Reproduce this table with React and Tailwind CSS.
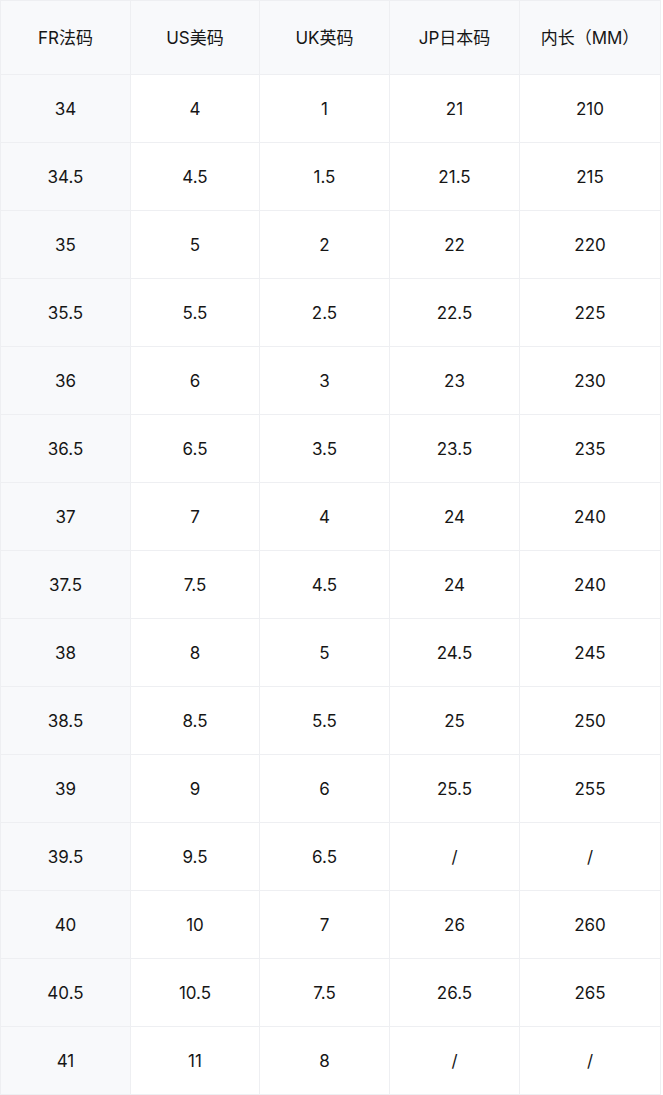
import React from 'react';

const headers = ['FR法码', 'US美码', 'UK英码', 'JP日本码', '内长（MM）'];

const rows = [
  ['34', '4', '1', '21', '210'],
  ['34.5', '4.5', '1.5', '21.5', '215'],
  ['35', '5', '2', '22', '220'],
  ['35.5', '5.5', '2.5', '22.5', '225'],
  ['36', '6', '3', '23', '230'],
  ['36.5', '6.5', '3.5', '23.5', '235'],
  ['37', '7', '4', '24', '240'],
  ['37.5', '7.5', '4.5', '24', '240'],
  ['38', '8', '5', '24.5', '245'],
  ['38.5', '8.5', '5.5', '25', '250'],
  ['39', '9', '6', '25.5', '255'],
  ['39.5', '9.5', '6.5', '/', '/'],
  ['40', '10', '7', '26', '260'],
  ['40.5', '10.5', '7.5', '26.5', '265'],
  ['41', '11', '8', '/', '/'],
];

const App = () => {
  return (
    <div className="bg-white w-[663px] min-h-[1095px]">
      <div
        className="grid grid-cols-[130px_129px_130px_130px_141px] w-[661px] border-t border-l border-[#eeeff2] text-[17px] text-[#161616]"
        style={{ fontFamily: '"Inter", "Noto Sans CJK SC", sans-serif' }}
      >
        {headers.map((h) => (
          <div
            key={h}
            className="h-[74px] pt-[2px] flex items-center justify-center bg-[#f8f9fb] border-r border-b border-[#eeeff2]"
          >
            {h}
          </div>
        ))}
        {rows.map((row, i) =>
          row.map((cell, j) => (
            <div
              key={i + '-' + j}
              className={
                j === 0
                  ? 'h-[68px] pt-[2px] flex items-center justify-center bg-[#f8f9fb] border-r border-b border-[#eeeff2]'
                  : 'h-[68px] pt-[2px] flex items-center justify-center bg-white border-r border-b border-[#eeeff2]'
              }
            >
              {cell}
            </div>
          ))
        )}
      </div>
    </div>
  );
};

export default App;
